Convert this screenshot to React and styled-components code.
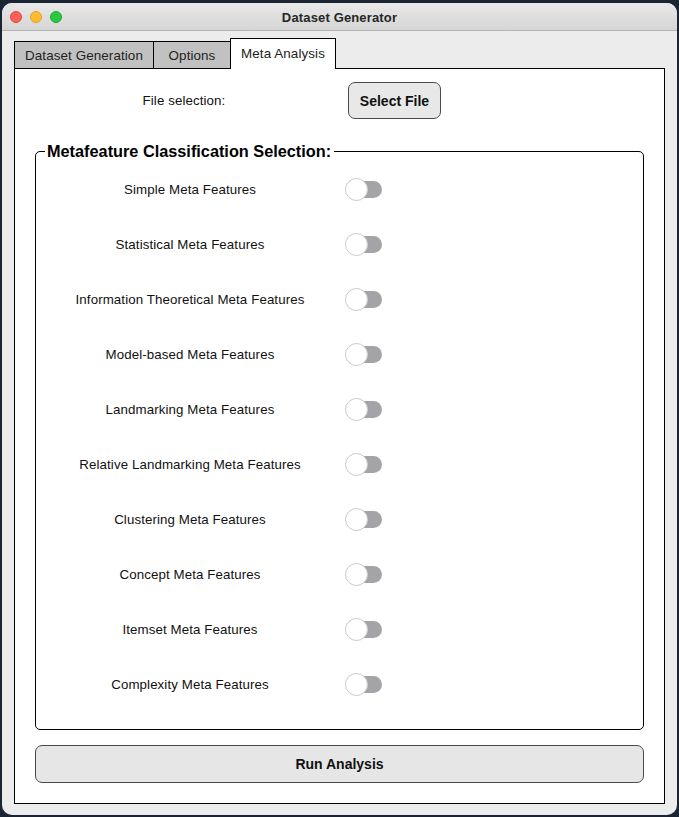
import React from "react";
import styled, { createGlobalStyle } from "styled-components";

const GlobalStyle = createGlobalStyle`
  html, body { margin: 0; padding: 0; }
  body {
    background: #1b2433;
    font-family: "Liberation Sans", Arial, sans-serif;
    color: #000;
  }
  * { box-sizing: border-box; }
`;

const Window = styled.div`
  margin: 3px 2px 2px 2px;
  width: 675px;
  height: 812px;
  border-radius: 10px;
  background: #ececec;
  overflow: hidden;
  display: flex;
  flex-direction: column;
`;

const TitleBar = styled.div`
  height: 28px;
  flex: none;
  border-bottom: 1px solid #b3b3b3;
  background: linear-gradient(#e8e8e8, #d5d5d5);
  display: grid;
  grid-template-columns: 1fr auto 1fr;
  align-items: center;
`;

const Lights = styled.div`
  display: flex;
  gap: 8px;
  padding-left: 8px;
`;

const Light = styled.span`
  width: 12px;
  height: 12px;
  border-radius: 50%;
  background: ${(p) => p.$c};
  border: 0.5px solid ${(p) => p.$b};
`;

const Title = styled.div`
  font-size: 13px;
  font-weight: bold;
  letter-spacing: 0.15px;
  color: #262626;
  padding-top: 1px;
`;

const Body = styled.div`
  flex: 1;
  display: flex;
  flex-direction: column;
  padding: 7px 12px 11px 12px;
`;

const TabBar = styled.div`
  display: flex;
  align-items: flex-end;
  height: 30px;
  flex: none;
  position: relative;
  z-index: 1;
`;

const Tab = styled.div`
  width: ${(p) => p.$w}px;
  height: ${(p) => (p.$active ? 31 : 27)}px;
  margin-left: ${(p) => (p.$first ? 0 : -1)}px;
  margin-bottom: ${(p) => (p.$active ? -1 : 0)}px;
  background: ${(p) => (p.$active ? "#fff" : "#c1c1c1")};
  border: 1px solid #000;
  border-bottom: none;
  display: flex;
  align-items: center;
  justify-content: center;
  font-size: 13.4px;
  letter-spacing: 0.1px;
  color: #222;
  padding-bottom: ${(p) => (p.$active ? 2 : 0)}px;
`;

const Panel = styled.div`
  flex: 1;
  background: #fff;
  border: 1px solid #000;
  padding: 13px 20px 20px 20px;
  display: flex;
  flex-direction: column;
`;

const FileRow = styled.div`
  display: flex;
  align-items: center;
  height: 37px;
  flex: none;
`;

const Label = styled.div`
  width: ${(p) => p.$w}px;
  text-align: center;
  font-size: 13.3px;
  letter-spacing: 0.1px;
  color: #111;
`;

const SelectButton = styled.button`
  margin-left: 15px;
  width: 93px;
  height: 37px;
  background: #e8e8e8;
  border: 1px solid #4a4a4a;
  border-radius: 7px;
  font-family: inherit;
  font-size: 14px;
  font-weight: bold;
  color: #111;
  padding: 0;
`;

const Group = styled.fieldset`
  flex: 1;
  margin: 23px 0 0 0;
  padding: 0;
  border: 1px solid #000;
  border-radius: 5px;
  min-width: 0;
`;

const Legend = styled.legend`
  margin-left: 9px;
  padding: 0 3px 0 2px;
  font-size: 16.3px;
  font-weight: bold;
  line-height: 19px;
`;

const Rows = styled.div`
  display: flex;
  flex-direction: column;
  padding-top: 1px;
`;

const Row = styled.div`
  height: 55px;
  display: flex;
  align-items: center;
`;

const Toggle = styled.div`
  position: relative;
  width: 38px;
  height: 23px;
  margin-left: 1px;
`;

const Track = styled.span`
  position: absolute;
  left: 12px;
  top: 3px;
  width: 25px;
  height: 17px;
  border-radius: 0 9px 9px 0;
  background: #a4a4a8;
`;

const Knob = styled.span`
  position: absolute;
  left: 0;
  top: 0;
  width: 23px;
  height: 23px;
  border-radius: 50%;
  background: #fff;
  border: 1px solid #c9c9c9;
`;

const RunButton = styled.button`
  flex: none;
  margin-top: 15px;
  height: 38px;
  width: 100%;
  background: #e6e6e6;
  border: 1px solid #4a4a4a;
  border-radius: 7px;
  font-family: inherit;
  font-size: 14px;
  font-weight: bold;
  color: #111;
`;

const features = [
  "Simple Meta Features",
  "Statistical Meta Features",
  "Information Theoretical Meta Features",
  "Model-based Meta Features",
  "Landmarking Meta Features",
  "Relative Landmarking Meta Features",
  "Clustering Meta Features",
  "Concept Meta Features",
  "Itemset Meta Features",
  "Complexity Meta Features",
];

export default function App() {
  return (
    <>
      <GlobalStyle />
      <Window>
        <TitleBar>
          <Lights>
            <Light $c="#fe5f57" $b="#e0443e" />
            <Light $c="#febc2e" $b="#dea123" />
            <Light $c="#28c840" $b="#1aab29" />
          </Lights>
          <Title>Dataset Generator</Title>
          <div />
        </TitleBar>
        <Body>
          <TabBar>
            <Tab $w={140} $first>Dataset Generation</Tab>
            <Tab $w={78}>Options</Tab>
            <Tab $w={106} $active>Meta Analysis</Tab>
          </TabBar>
          <Panel>
            <FileRow>
              <Label $w={298}>File selection:</Label>
              <SelectButton>Select File</SelectButton>
            </FileRow>
            <Group>
              <Legend>Metafeature Classification Selection:</Legend>
              <Rows>
                {features.map((f) => (
                  <Row key={f}>
                    <Label $w={308}>{f}</Label>
                    <Toggle>
                      <Track />
                      <Knob />
                    </Toggle>
                  </Row>
                ))}
              </Rows>
            </Group>
            <RunButton>Run Analysis</RunButton>
          </Panel>
        </Body>
      </Window>
    </>
  );
}
